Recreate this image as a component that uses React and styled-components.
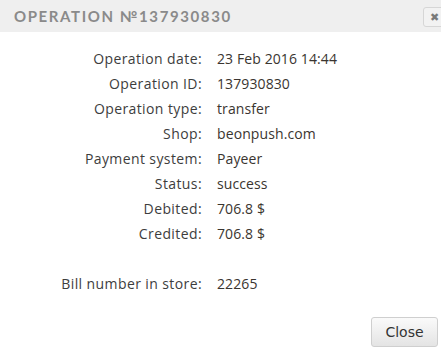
import React from "react";
import styled, { createGlobalStyle } from "styled-components";

const Global = createGlobalStyle`
  html, body { margin: 0; padding: 0; background: #fff; }
  body { width: 441px; height: 352px; overflow: hidden; }
`;

const Dialog = styled.div`
  width: 441px;
  height: 352px;
  display: flex;
  flex-direction: column;
  background: #fff;
  font-family: "Open Sans", sans-serif;
`;

const Header = styled.div`
  height: 32px;
  flex: none;
  background: #efefef;
  display: flex;
  align-items: center;
  justify-content: space-between;
  padding-left: 14px;
`;

const Title = styled.h2`
  margin: 0 0 1px;
  font-family: "Lato", sans-serif;
  font-weight: 700;
  font-size: 15px;
  letter-spacing: 1.6px;
  color: #8a8a8a;
`;

const XButton = styled.button`
  width: 22px;
  height: 20px;
  margin-right: -4px;
  margin-top: 2px;
  border: 1px solid #d6d6d6;
  border-radius: 3px;
  background: #f2f2f2;
  color: #7a7a7a;
  font-size: 11px;
  padding: 0;
  display: flex;
  align-items: center;
  justify-content: center;
`;

const Body = styled.div`
  flex: 1;
  padding-top: 14px;
`;

const Grid = styled.div`
  display: grid;
  grid-template-columns: 202px 1fr;
  column-gap: 15px;
  grid-auto-rows: 25px;
  align-items: center;
  font-size: 14px;
`;

const Label = styled.div`
  text-align: right;
  color: #3d3d3d;
  letter-spacing: 0.4px;
`;

const Value = styled.div`
  color: #3a3530;
  letter-spacing: 0.1px;
`;

const Spacer = styled.div`
  grid-column: 1 / -1;
`;

const Footer = styled.div`
  display: flex;
  justify-content: flex-end;
  padding: 0 3px 5px 0;
`;

const CloseButton = styled.button`
  width: 67px;
  height: 30px;
  border: 1px solid #cfcfcf;
  border-radius: 3px;
  background: linear-gradient(#fafafa, #e4e4e4);
  font-family: "DejaVu Sans", sans-serif;
  font-size: 14px;
  color: #333;
  padding: 0;
`;

const rows = [
  ["Operation date:", "23 Feb 2016 14:44"],
  ["Operation ID:", "137930830"],
  ["Operation type:", "transfer"],
  ["Shop:", "beonpush.com"],
  ["Payment system:", "Payeer"],
  ["Status:", "success"],
  ["Debited:", "706.8 $"],
  ["Credited:", "706.8 $"],
];

export default function App() {
  return (
    <Dialog>
      <Global />
      <Header>
        <Title>OPERATION №137930830</Title>
        <XButton>✖</XButton>
      </Header>
      <Body>
        <Grid>
          {rows.map(([l, v]) => (
            <React.Fragment key={l}>
              <Label>{l}</Label>
              <Value>{v}</Value>
            </React.Fragment>
          ))}
          <Spacer />
          <Label>Bill number in store:</Label>
          <Value>22265</Value>
        </Grid>
      </Body>
      <Footer>
        <CloseButton>Close</CloseButton>
      </Footer>
    </Dialog>
  );
}
